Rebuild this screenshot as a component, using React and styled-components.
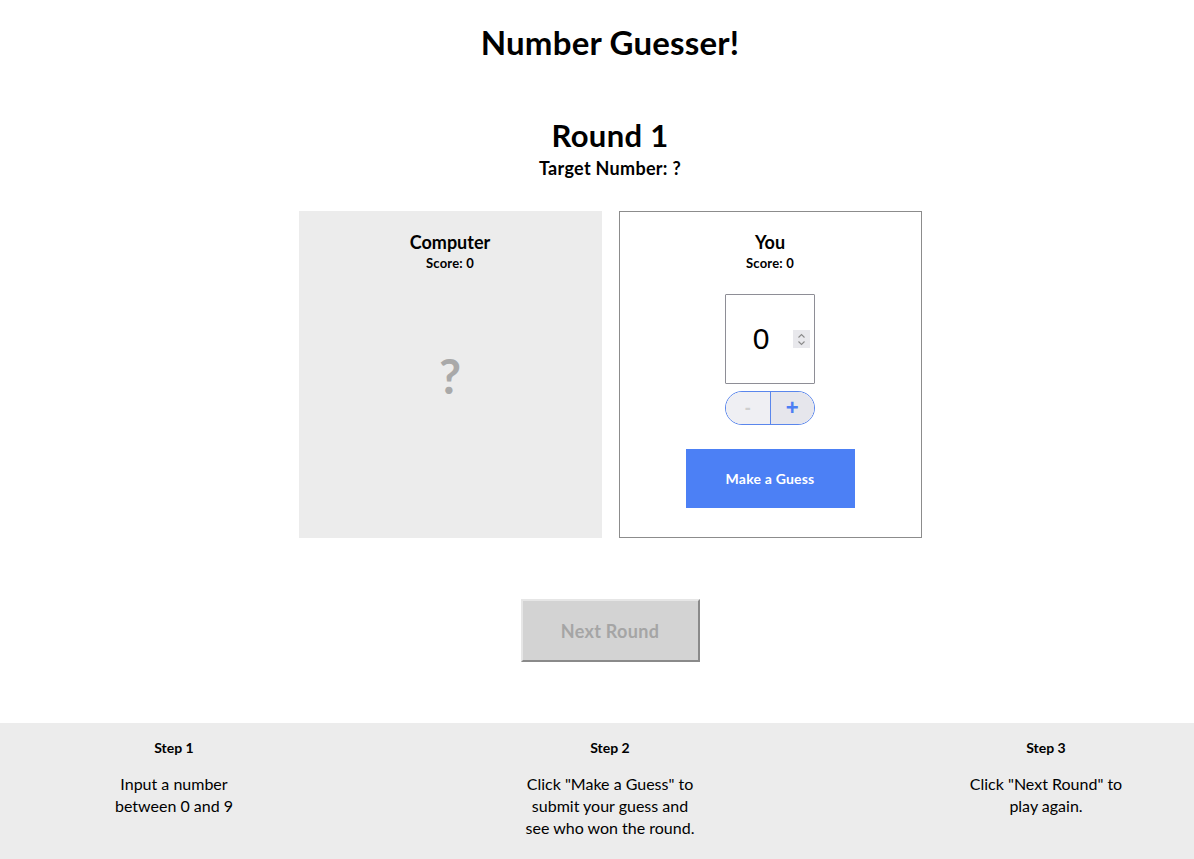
import React, { useState } from "react";
import styled, { createGlobalStyle } from "styled-components";

const GlobalStyle = createGlobalStyle`
  * { box-sizing: border-box; }
  body {
    margin: 0;
    font-family: "Lato", "Noto Sans", sans-serif;
    color: #000;
    background: #fff;
  }
`;

const App = () => {
  const [guess, setGuess] = useState(0);

  const down = () => setGuess((g) => (g > 0 ? g - 1 : g));
  const up = () => setGuess((g) => (g < 9 ? g + 1 : g));

  return (
    <>
      <GlobalStyle />
      <Page>
        <Main>
          <Title>Number Guesser!</Title>
          <RoundTitle>Round 1</RoundTitle>
          <Target>Target Number: ?</Target>

          <Panels>
            <Panel $grey>
              <PanelName>Computer</PanelName>
              <Score>Score: 0</Score>
              <Unknown>?</Unknown>
            </Panel>
            <Panel>
              <PanelName>You</PanelName>
              <Score>Score: 0</Score>
              <NumberBox>
                <NumberValue>{guess}</NumberValue>
                <Spinner>
                  <svg width="9" height="13" viewBox="0 0 9 13" fill="none">
                    <path d="M1.5 4.5 L4.5 1.5 L7.5 4.5" stroke="#8a8a8a" strokeWidth="1.1" />
                    <path d="M1.5 8.5 L4.5 11.5 L7.5 8.5" stroke="#8a8a8a" strokeWidth="1.1" />
                  </svg>
                </Spinner>
              </NumberBox>
              <Stepper>
                <StepButton $disabled onClick={down}>-</StepButton>
                <StepButton $right onClick={up}>+</StepButton>
              </Stepper>
              <GuessButton>Make a Guess</GuessButton>
            </Panel>
          </Panels>

          <NextButton disabled>Next Round</NextButton>
        </Main>

        <Footer>
          <Step $width={140}>
            <StepTitle>Step 1</StepTitle>
            <StepText>Input a number between 0 and 9</StepText>
          </Step>
          <Step $width={180}>
            <StepTitle>Step 2</StepTitle>
            <StepText>Click "Make a Guess" to submit your guess and see who won the round.</StepText>
          </Step>
          <Step $width={180}>
            <StepTitle>Step 3</StepTitle>
            <StepText>Click "Next Round" to play again.</StepText>
          </Step>
        </Footer>
      </Page>
    </>
  );
};

export default App;

const Page = styled.div`
  width: 100%;
  overflow: hidden;
`;

const Main = styled.div`
  display: flex;
  flex-direction: column;
  align-items: center;
  padding: 22px 0 61px 26px;
`;

const Title = styled.h1`
  margin: 0;
  font-size: 33px;
  line-height: 40px;
  font-weight: 700;
  letter-spacing: 0.2px;
`;

const RoundTitle = styled.h2`
  margin: 56px 0 0;
  font-size: 31px;
  line-height: 34px;
  font-weight: 700;
  letter-spacing: 0.3px;
`;

const Target = styled.h3`
  margin: 5px 0 0;
  font-size: 18px;
  line-height: 22px;
  font-weight: 700;
  letter-spacing: 0.3px;
`;

const Panels = styled.div`
  display: flex;
  gap: 17px;
  margin-top: 32px;
`;

const Panel = styled.div`
  width: 303px;
  height: 327px;
  display: flex;
  flex-direction: column;
  align-items: center;
  padding-top: 18px;
  background: ${(p) => (p.$grey ? "#ececec" : "#fff")};
  border: 1px solid ${(p) => (p.$grey ? "#ececec" : "#8c8c8c")};
`;

const PanelName = styled.div`
  font-size: 18px;
  line-height: 24px;
  font-weight: 700;
`;

const Score = styled.div`
  font-size: 13px;
  line-height: 18px;
  font-weight: 700;
  letter-spacing: 0.2px;
`;

const Unknown = styled.div`
  margin-top: 75px;
  font-size: 48px;
  line-height: 58px;
  font-weight: 700;
  color: #a9a9a9;
`;

const NumberBox = styled.div`
  position: relative;
  width: 90px;
  height: 90px;
  margin-top: 22px;
  border: 1px solid #8e8e96;
  border-radius: 1px;
  display: flex;
  align-items: center;
  justify-content: center;
  padding-right: 18px;
`;

const NumberValue = styled.span`
  font-family: "Liberation Sans", Arial, sans-serif;
  font-size: 30px;
  line-height: 34px;
`;

const Spinner = styled.div`
  position: absolute;
  right: 4px;
  top: 35px;
  width: 17px;
  height: 18px;
  background: #e8e8ec;
  display: flex;
  align-items: center;
  justify-content: center;
`;

const Stepper = styled.div`
  display: flex;
  width: 90px;
  height: 34px;
  margin-top: 7px;
  border: 1px solid #5a86ec;
  border-radius: 17px;
  overflow: hidden;
`;

const StepButton = styled.button`
  flex: 1;
  border: none;
  border-left: ${(p) => (p.$right ? "1px solid #5a86ec" : "none")};
  background: ${(p) => (p.$right ? "#e6e6ec" : "#efeff3")};
  color: ${(p) => (p.$disabled ? "#cfcfcf" : "#4c7ef3")};
  font-family: "Liberation Sans", Arial, sans-serif;
  font-size: ${(p) => (p.$right ? "22px" : "18px")};
  font-weight: 700;
  padding: 0;
  cursor: pointer;
`;

const GuessButton = styled.button`
  width: 169px;
  height: 59px;
  margin-top: 24px;
  border: none;
  background: #4c80f5;
  color: #fff;
  font-family: "Lato", sans-serif;
  font-size: 14px;
  font-weight: 700;
  letter-spacing: 0.2px;
  cursor: pointer;
`;

const NextButton = styled.button`
  width: 179px;
  height: 63px;
  margin-top: 61px;
  background: #d3d3d3;
  color: #a5a5a5;
  font-family: "Lato", sans-serif;
  font-size: 18px;
  font-weight: 700;
  letter-spacing: 0.3px;
  border: 2px solid;
  border-color: #e6e6e6 #8a8a8a #8a8a8a #e6e6e6;
`;

const Footer = styled.footer`
  display: grid;
  grid-template-columns: repeat(3, 300px);
  justify-content: center;
  column-gap: 136px;
  padding: 16px 0 20px 26px;
  background: #ececec;
`;

const Step = styled.div`
  display: flex;
  flex-direction: column;
  align-items: center;
  text-align: center;
  & > p {
    max-width: ${(p) => p.$width}px;
  }
`;

const StepTitle = styled.div`
  font-size: 14px;
  line-height: 18px;
  font-weight: 700;
`;

const StepText = styled.p`
  margin: 16px 0 0;
  font-size: 16px;
  line-height: 22px;
`;
